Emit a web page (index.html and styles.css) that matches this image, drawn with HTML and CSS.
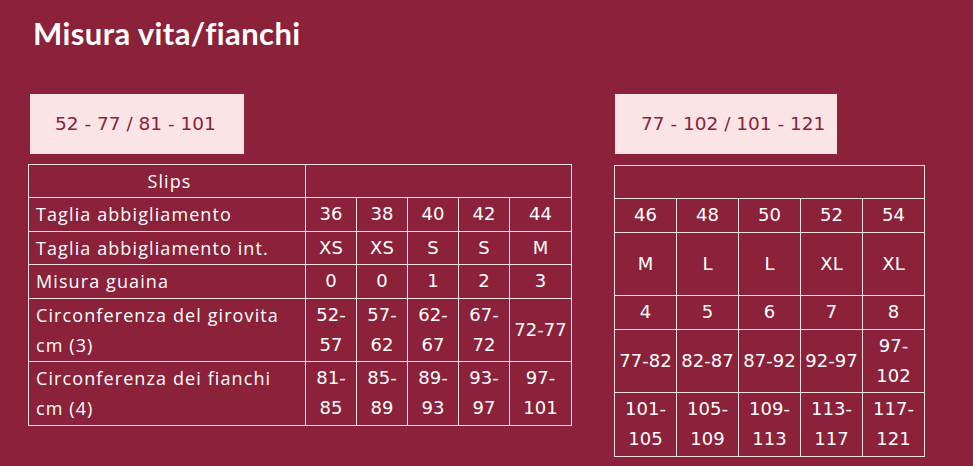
FILE: index.html
```html
<!DOCTYPE html>
<html lang="it">
<head>
<meta charset="utf-8">
<title>Misura vita/fianchi</title>
<link rel="stylesheet" href="styles.css">
</head>
<body>
<main class="page">
  <h1 class="title">Misura vita/fianchi</h1>
  <div class="charts">
    <section class="chart chart-left">
      <div class="range range-left">52 - 77 / 81 - 101</div>
      <table class="sizes sizes-left">
        <colgroup>
          <col class="col-label">
          <col class="col-num"><col class="col-num"><col class="col-num"><col class="col-num">
          <col class="col-wide">
        </colgroup>
        <tr>
          <td class="label label-head">Slips</td>
          <td class="blank" colspan="5"></td>
        </tr>
        <tr>
          <td class="label">Taglia abbigliamento</td>
          <td class="num">36</td><td class="num">38</td><td class="num">40</td><td class="num">42</td><td class="num">44</td>
        </tr>
        <tr>
          <td class="label">Taglia abbigliamento int.</td>
          <td class="num">XS</td><td class="num">XS</td><td class="num">S</td><td class="num">S</td><td class="num">M</td>
        </tr>
        <tr>
          <td class="label">Misura guaina</td>
          <td class="num">0</td><td class="num">0</td><td class="num">1</td><td class="num">2</td><td class="num">3</td>
        </tr>
        <tr>
          <td class="label">Circonferenza del girovita<br>cm (3)</td>
          <td class="num">52-<br>57</td><td class="num">57-<br>62</td><td class="num">62-<br>67</td><td class="num">67-<br>72</td><td class="num">72-77</td>
        </tr>
        <tr>
          <td class="label">Circonferenza dei fianchi<br>cm (4)</td>
          <td class="num">81-<br>85</td><td class="num">85-<br>89</td><td class="num">89-<br>93</td><td class="num">93-<br>97</td><td class="num">97-<br>101</td>
        </tr>
      </table>
    </section>
    <section class="chart chart-right">
      <div class="range range-right">77 - 102 / 101 - 121</div>
      <table class="sizes sizes-right">
        <colgroup>
          <col class="col-right"><col class="col-right"><col class="col-right"><col class="col-right"><col class="col-right">
        </colgroup>
        <tr>
          <td class="blank" colspan="5"></td>
        </tr>
        <tr>
          <td class="num">46</td><td class="num">48</td><td class="num">50</td><td class="num">52</td><td class="num">54</td>
        </tr>
        <tr class="row-tall">
          <td class="num">M</td><td class="num">L</td><td class="num">L</td><td class="num">XL</td><td class="num">XL</td>
        </tr>
        <tr>
          <td class="num">4</td><td class="num">5</td><td class="num">6</td><td class="num">7</td><td class="num">8</td>
        </tr>
        <tr>
          <td class="num">77-82</td><td class="num">82-87</td><td class="num">87-92</td><td class="num">92-97</td><td class="num">97-<br>102</td>
        </tr>
        <tr>
          <td class="num">101-<br>105</td><td class="num">105-<br>109</td><td class="num">109-<br>113</td><td class="num">113-<br>117</td><td class="num">117-<br>121</td>
        </tr>
      </table>
    </section>
  </div>
</main>
</body>
</html>
```

FILE: styles.css
```css
html, body {
  margin: 0;
  padding: 0;
  background: #8b2239;
}

body {
  width: 973px;
  height: 466px;
  overflow: hidden;
  font-family: "Open Sans", "Noto Sans", sans-serif;
  color: #ffffff;
}

.page {
  padding: 15px 0 0 28px;
}

.title {
  margin: 0 0 42px 5px;
  font-family: Lato, "Noto Sans", sans-serif;
  font-weight: 700;
  font-size: 31px;
  line-height: 1.2;
  letter-spacing: 0.4px;
  color: #ffffff;
}

.charts {
  display: flex;
  align-items: flex-start;
  gap: 42px;
}

.chart {
  display: flex;
  flex-direction: column;
  align-items: flex-start;
}

.range {
  box-sizing: border-box;
  height: 59.5px;
  display: flex;
  align-items: center;
  background: #fbe4e6;
  color: #8b2239;
  font-family: "DejaVu Sans", Verdana, sans-serif;
  font-size: 18.5px;
}

.range-left {
  width: 214px;
  margin-left: 2px;
  padding-left: 25px;
}

.range-right {
  width: 222px;
  margin-left: 1px;
  padding-left: 26px;
}

.sizes {
  border-collapse: collapse;
  table-layout: fixed;
  margin-top: 10px;
}

.sizes-left {
  width: 543px;
}

.sizes-right {
  width: 311px;
  margin-top: 11px;
}

.col-label { width: 277px; }
.col-num { width: 51px; }
.col-wide { width: 62px; }
.col-right { width: 62px; }

.sizes td {
  border: 1px solid #eedfe3;
  padding: 1.25px 2px;
  line-height: 30px;
  vertical-align: middle;
  white-space: nowrap;
}

.sizes td.blank {
  height: 30px;
}

.sizes td.label {
  padding-left: 7px;
  font-family: "Open Sans", "Noto Sans", sans-serif;
  font-size: 18px;
  letter-spacing: 1.1px;
  text-align: left;
}

.sizes td.label-head {
  text-align: center;
}

.sizes td.num {
  font-family: "DejaVu Sans", Verdana, sans-serif;
  font-size: 18px;
  text-align: center;
}

.row-tall td {
  height: 60px;
}
```
